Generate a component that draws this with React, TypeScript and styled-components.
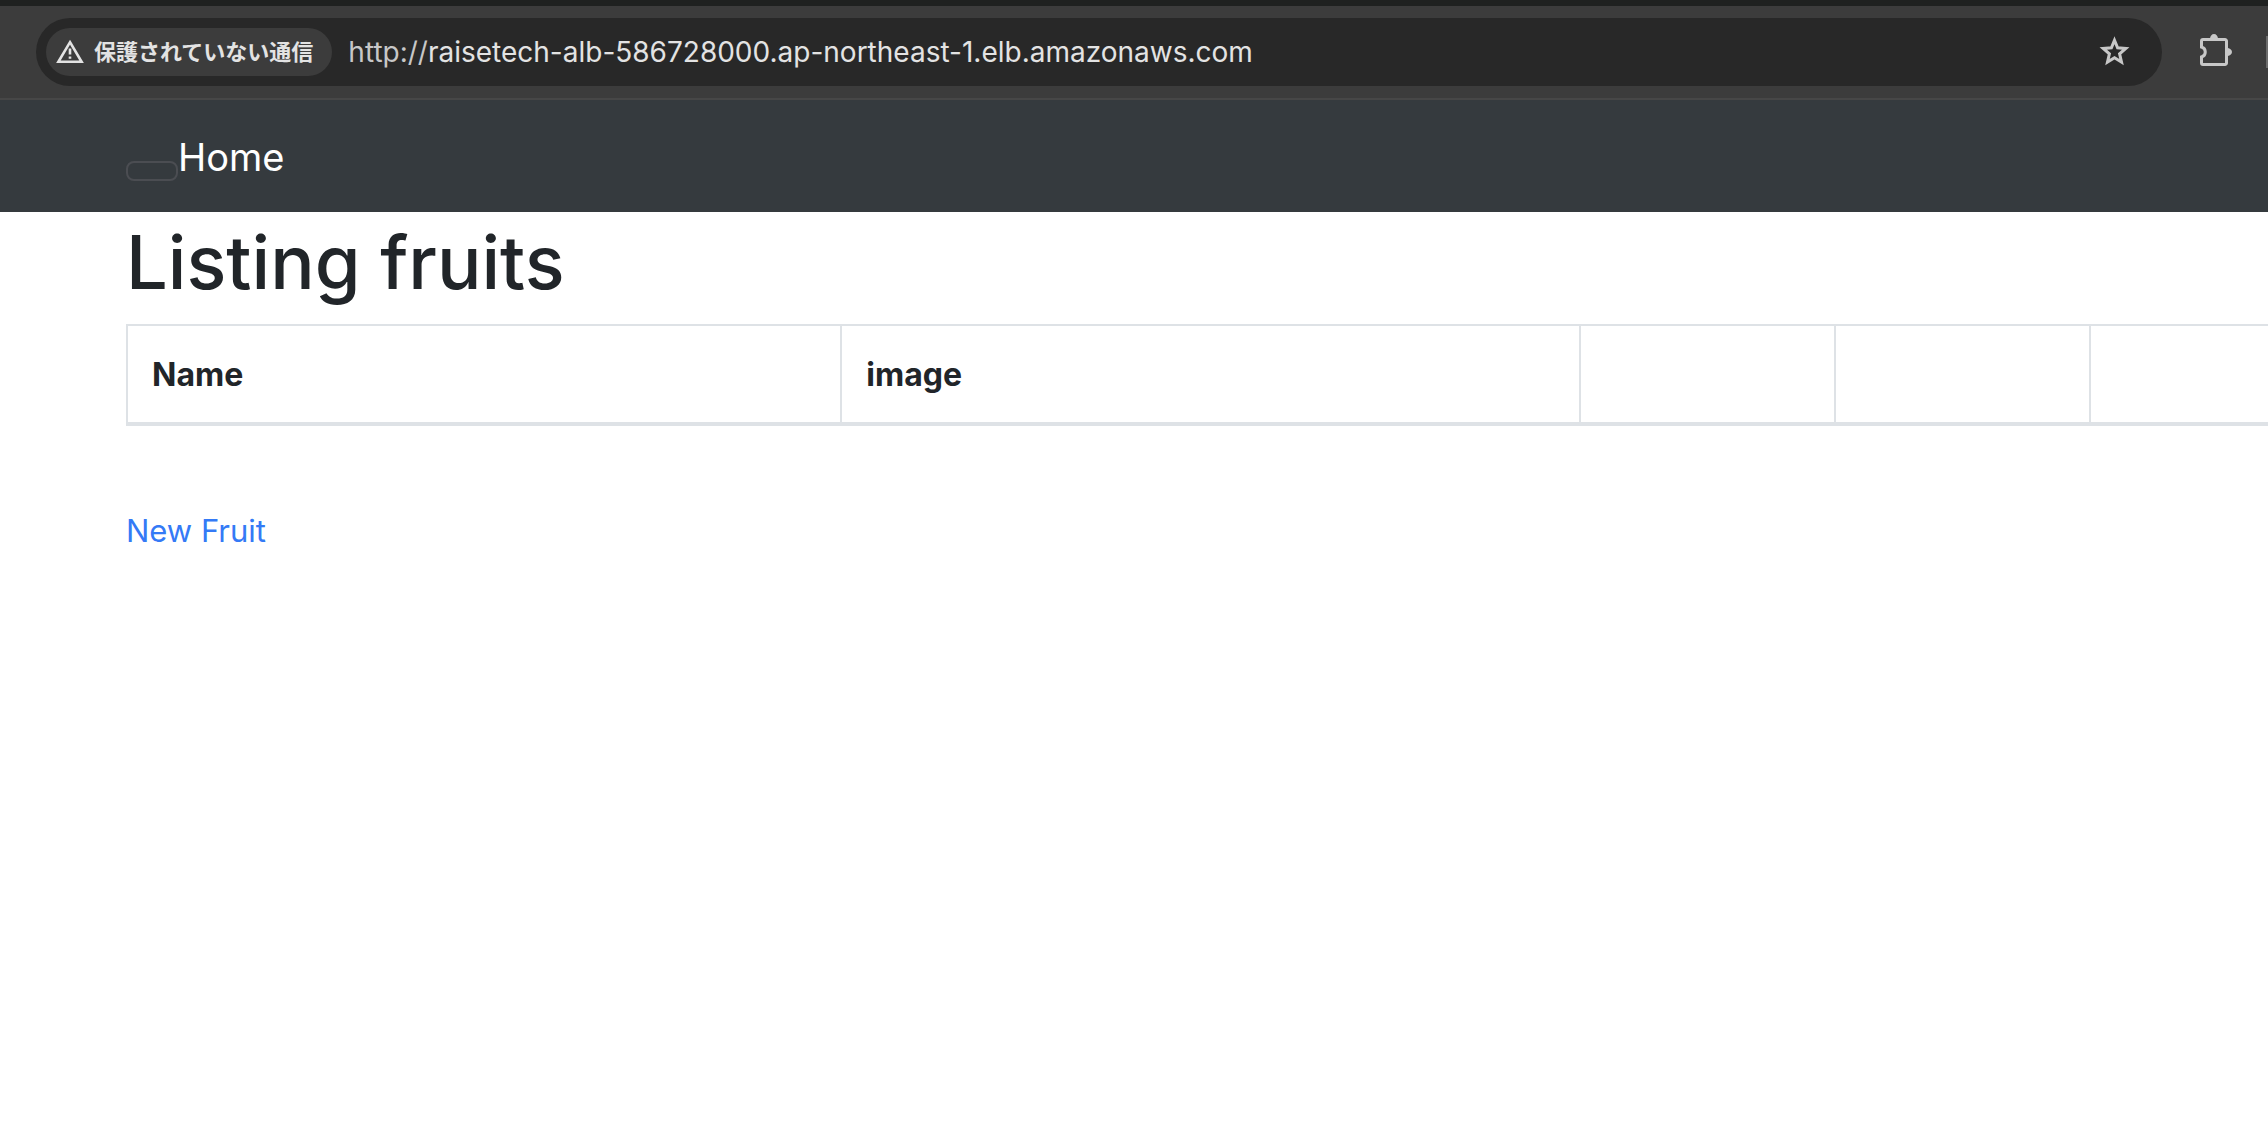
import React from "react";
import styled, { createGlobalStyle } from "styled-components";

const GlobalStyle = createGlobalStyle`
  *, *::before, *::after { box-sizing: border-box; }
  body {
    margin: 0;
    background: #fff;
    color: #212529;
    font-family: Inter, "Noto Sans CJK JP", sans-serif;
    font-size: 31px;
    line-height: 48px;
    overflow-x: hidden;
  }
`;

const BrowserBar = styled.header`
  display: flex;
  align-items: center;
  gap: 38px;
  height: 100px;
  padding-left: 36px;
  background: #3c3c3c;
  border-top: 6px solid #1f2120;
  border-bottom: 2px solid #474747;
`;

const AddressBar = styled.div`
  display: flex;
  flex: 1;
  align-items: center;
  height: 68px;
  padding: 0 32px 0 10px;
  border-radius: 34px;
  background: #282828;
  color: #e3e3e3;
  font-size: 28px;
`;

const SecurityChip = styled.button`
  display: flex;
  align-items: center;
  gap: 10px;
  height: 48px;
  margin-right: 16px;
  padding: 0 19px 0 10px;
  border: 0;
  border-radius: 24px;
  background: #3c3c3c;
  color: #e3e3e3;
  font-family: "Noto Sans CJK JP", sans-serif;
  font-size: 22px;
  font-weight: 700;
  line-height: 32px;
  white-space: nowrap;
`;

const ChipLabel = styled.span`
  padding-bottom: 4px;
`;

const Scheme = styled.label`
  color: #c7c7c7;
`;

const UrlInput = styled.input`
  flex: 1;
  min-width: 0;
  padding: 0;
  border: 0;
  outline: 0;
  background: transparent;
  color: inherit;
  font: inherit;
`;

const IconButton = styled.button`
  display: flex;
  padding: 0;
  border: 0;
  background: none;
  color: #c7c7c7;
`;

const ToolbarActions = styled.div`
  display: flex;
  align-items: center;
  gap: 34px;
`;

const ProfileEdge = styled.div`
  width: 2px;
  height: 32px;
  background: #6b6b6b;
`;

const Navbar = styled.nav`
  padding: 27px 126px 25px;
  background: #353a3e;
  font-size: 38px;
  line-height: 60px;
`;

const Toggler = styled.button`
  padding: 8px 24px;
  border: 2px solid #4b4d52;
  border-radius: 8px;
  background: transparent;
`;

const Brand = styled.a`
  color: #fff;
  text-decoration: none;
`;

const Main = styled.main`
  padding-left: 126px;
`;

const Title = styled.h1`
  margin: 0;
  padding: 2px 0 14px;
  font-size: 74px;
  font-weight: 500;
  line-height: 96px;
`;

const FruitTable = styled.table`
  width: 100%;
  margin-bottom: 81px;
  border-spacing: 0;
  table-layout: fixed;
  border-top: 2px solid #dee2e6;
  border-bottom: 4px solid #dee2e6;
`;

const HeadCell = styled.th<{ $width?: string }>`
  width: ${(p) => p.$width ?? "auto"};
  height: 96px;
  padding: 25px 24px 23px;
  border-left: 2px solid #dee2e6;
  font-size: 32px;
  font-weight: 700;
  text-align: left;
`;

const NewLink = styled.a`
  color: #347af6;
  text-decoration: none;
`;

const WarningIcon = () => (
  <svg width="28" height="26" viewBox="0 0 28 26" fill="none" aria-hidden="true">
    <path d="M14 3.2 25.6 22.8H2.4Z" stroke="currentColor" strokeWidth="2.6" />
    <path d="M14 9.6v6M14 17.4v2.4" stroke="currentColor" strokeWidth="2.6" />
  </svg>
);

const StarIcon = () => (
  <svg width="31" height="32" viewBox="0 0 31 32" fill="none" aria-hidden="true">
    <path
      d="M15.5 4.2 18.6 11.8 26.8 12.5 20.6 17.9 22.5 26 15.5 21.7 8.5 26 10.4 17.9 4.2 12.5 12.4 11.8Z"
      stroke="currentColor"
      strokeWidth="3"
    />
  </svg>
);

const ExtensionsIcon = () => (
  <svg width="32" height="36" viewBox="0 0 32 36" fill="none" aria-hidden="true">
    <path
      d="M3 5.5H25a1.5 1.5 0 0 1 1.5 1.5V29a1.5 1.5 0 0 1-1.5 1.5H3A1.5 1.5 0 0 1 1.5 29V23a5.2 5.2 0 0 0 0-10V7A1.5 1.5 0 0 1 3 5.5Z"
      stroke="currentColor"
      strokeWidth="3"
    />
    <path d="M10 5a4 5 0 0 1 8 0ZM27 14a5 4 0 0 1 0 8Z" fill="currentColor" />
  </svg>
);

export default function App() {
  return (
    <>
      <GlobalStyle />
      <BrowserBar>
        <AddressBar>
          <SecurityChip type="button">
            <WarningIcon />
            <ChipLabel>保護されていない通信</ChipLabel>
          </SecurityChip>
          <Scheme htmlFor="url">http://</Scheme>
          <UrlInput
            id="url"
            type="text"
            defaultValue="raisetech-alb-586728000.ap-northeast-1.elb.amazonaws.com"
          />
          <IconButton type="button" aria-label="Bookmark">
            <StarIcon />
          </IconButton>
        </AddressBar>
        <ToolbarActions>
          <IconButton type="button" aria-label="Extensions">
            <ExtensionsIcon />
          </IconButton>
          <ProfileEdge />
        </ToolbarActions>
      </BrowserBar>
      <Navbar>
        <Toggler type="button" aria-label="Toggle navigation" />
        <Brand href="#home">Home</Brand>
      </Navbar>
      <Main>
        <Title>Listing fruits</Title>
        <FruitTable>
          <thead>
            <tr>
              <HeadCell $width="33.35%">Name</HeadCell>
              <HeadCell $width="34.5%">image</HeadCell>
              <HeadCell $width="11.9%" />
              <HeadCell $width="11.9%" />
              <HeadCell />
            </tr>
          </thead>
        </FruitTable>
        <NewLink href="#new">New Fruit</NewLink>
      </Main>
    </>
  );
}
